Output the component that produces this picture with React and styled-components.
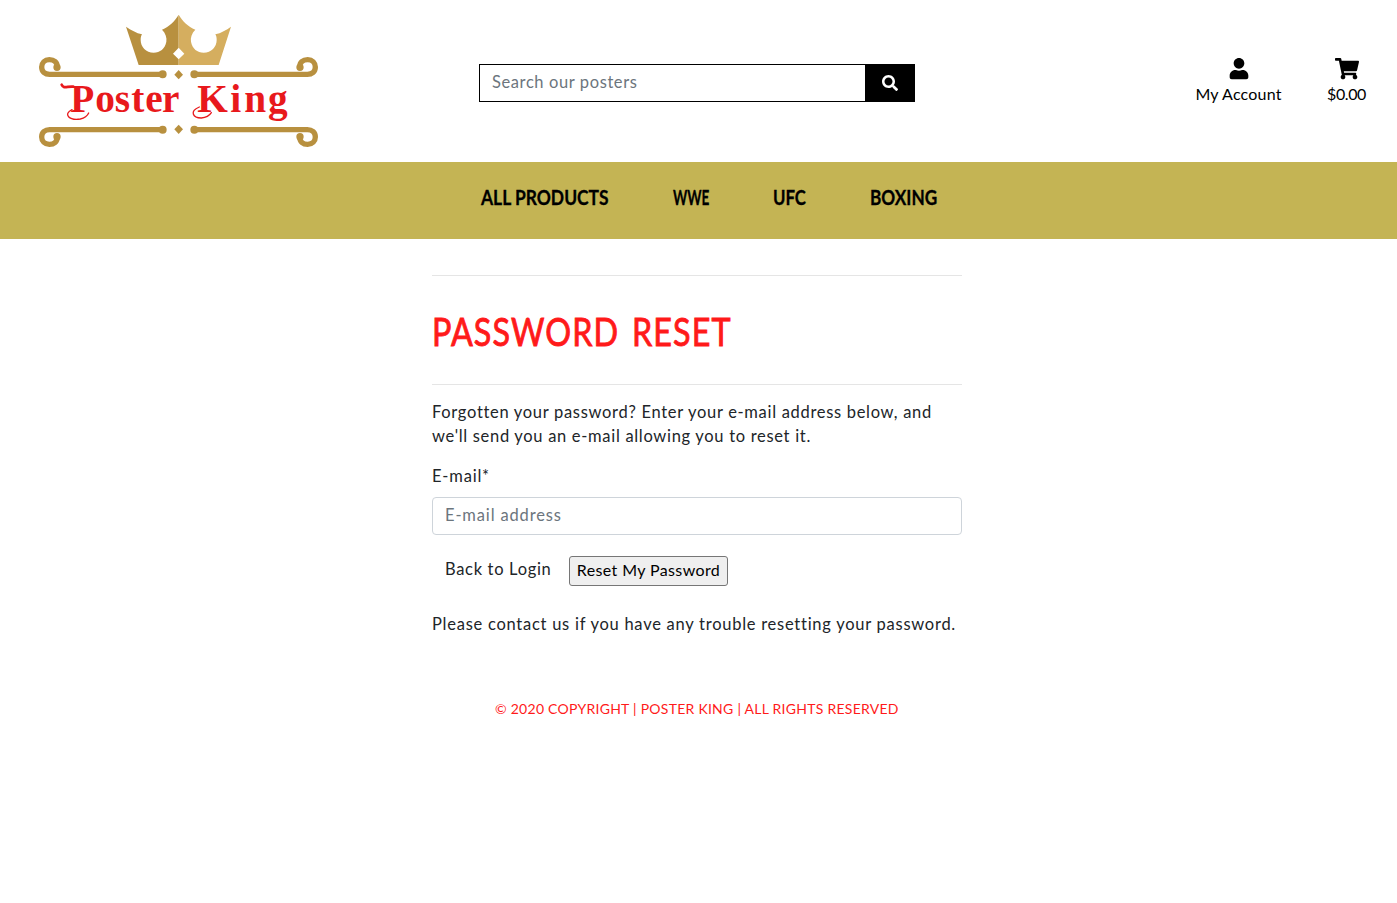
import React from "react";
import styled, { createGlobalStyle } from "styled-components";
import { FaUser, FaShoppingCart, FaSearch } from "react-icons/fa";

const GlobalStyle = createGlobalStyle`
  *, *::before, *::after { box-sizing: border-box; }
  body {
    margin: 0;
    background: #fff;
    color: #212529;
    font-family: Lato, "Open Sans", sans-serif;
    font-size: 16.5px;
    line-height: 24px;
  }
`;

const Header = styled.header`
  display: grid;
  grid-template-columns: 479px 436px 1fr;
  height: 162px;
`;

const LogoLink = styled.a`
  display: block;
  padding: 5px 0 0 30px;
`;

const LogoSvg = styled.svg`
  display: block;
  width: 300px;
  height: 150px;
`;

const SearchForm = styled.form`
  display: flex;
  height: 38px;
  margin-top: 64px;
`;

const SearchInput = styled.input`
  flex: 1;
  min-width: 0;
  padding: 0 12px 2px;
  border: 1px solid #000;
  border-right: 0;
  border-radius: 0;
  background: #fff;
  font: inherit;
  letter-spacing: 0.6px;
  outline: none;
  &::placeholder { color: #6c757d; opacity: 1; }
`;

const SearchButton = styled.button`
  display: flex;
  align-items: center;
  justify-content: center;
  width: 50px;
  padding: 0;
  border: 0;
  background: #000;
  color: #fff;
  font-size: 16px;
`;

const Actions = styled.div`
  display: flex;
  justify-content: flex-end;
  align-items: flex-start;
  gap: 45px;
  padding: 58px 31px 0 0;
`;

const Action = styled.a`
  display: flex;
  flex-direction: column;
  align-items: center;
  width: ${(p) => p.$width}px;
  color: #000;
  font-size: 16px;
  letter-spacing: ${(p) => p.$spacing}px;
  svg { display: block; width: 24px; height: 21.33px; margin-top: 0.4px; }
  span { margin-top: 2px; white-space: nowrap; }
`;

const Nav = styled.nav`
  display: flex;
  height: 77px;
  padding: 23px 0 0 481px;
  gap: 64px;
  background: #c4b454;
`;

const NavLink = styled.a`
  width: ${(p) => p.$width}px;
  color: #000;
  font-size: 20px;
  font-weight: 700;
  white-space: nowrap;
  -webkit-text-stroke: 0.3px #000;
  span {
    display: inline-block;
    transform: scaleX(${(p) => p.$condense});
    transform-origin: left;
  }
`;

const Main = styled.main`
  width: 530px;
  margin: 36px 0 0 432px;
`;

const Rule = styled.hr`
  height: 0;
  margin: 0;
  border: 0;
  border-top: 1px solid rgba(0, 0, 0, 0.1);
`;

const Title = styled.h1`
  margin: 0;
  height: 108px;
  padding-top: 31px;
  color: #ff1a1a;
  font-size: 38px;
  font-weight: 400;
  line-height: 48px;
  letter-spacing: 1.3px;
  word-spacing: 4px;
  white-space: nowrap;
  -webkit-text-stroke: 0.9px #ff1a1a;
  transform: scaleX(0.85);
  transform-origin: left;
`;

const Paragraph = styled.p`
  margin: ${(p) => p.$top}px 0 0;
  letter-spacing: ${(p) => p.$spacing}px;
  white-space: nowrap;
`;

const Label = styled.label`
  display: block;
  margin: 16px 0 9px;
  letter-spacing: 0.8px;
`;

const EmailInput = styled.input`
  display: block;
  width: 100%;
  height: 38px;
  padding: 0 12px 2px;
  border: 1px solid #ced4da;
  border-radius: 4px;
  font: inherit;
  letter-spacing: 0.85px;
  outline: none;
  &::placeholder { color: #6c757d; opacity: 1; }
`;

const ButtonRow = styled.div`
  display: flex;
  height: 30px;
  margin-top: 21px;
`;

const BackLink = styled.a`
  width: 137px;
  padding: 1px 0 0 13px;
  letter-spacing: 0.68px;
  white-space: nowrap;
`;

const ResetButton = styled.button`
  width: 159px;
  height: 30px;
  padding: 0 0 3px;
  border: 1px solid #767676;
  border-radius: 3px;
  background: #efefef;
  color: #000;
  font: inherit;
  font-size: 16px;
  letter-spacing: 0.38px;
  white-space: nowrap;
`;

const Footer = styled.footer`
  margin-top: 61px;
  padding-left: 495px;
  color: #ff1a1a;
  font-size: 14px;
  letter-spacing: 0.26px;
  white-space: nowrap;
`;

/* One scroll bar of the frame: a curled end, a rail and a round tip. */
function Scroll() {
  return (
    <g fill="none" stroke="#b8903f" strokeWidth="16" strokeLinecap="round">
      <path d="M82 187 C82 171 72 164 58 164 C44 164 35 174 35 186 C35 200 45 208 59 208 H396" />
      <circle cx="81" cy="187" r="3" />
      <circle cx="398" cy="208" r="4" />
    </g>
  );
}

function Frame() {
  return (
    <>
      <Scroll />
      <g transform="translate(891 0) scale(-1 1)"><Scroll /></g>
      <path d="M446 195l13 14-13 14-13-14z" fill="#b8903f" />
    </>
  );
}

function Logo() {
  return (
    <LogoSvg viewBox="0 0 900 450" role="img" aria-label="Poster King">
      <path fill="#b8903f" d="M446 29C435 48 418 65 396 74C407 85 411 98 409 110C405 131 390 143 371 143C348 143 332 126 332 105C332 98 333 93 336 88C319 84 303 75 288 65L326 180H446V163L429 146L446 128Z" />
      <path fill="#d5ae5f" d="M446 29C457 48 474 65 496 74C485 85 481 98 483 110C487 131 502 143 521 143C544 143 560 126 560 105C560 98 559 93 556 88C573 84 589 75 603 65L566 180H446V163L463 146L446 128Z" />
      <Frame />
      <g transform="translate(0 582) scale(1 -1)"><Frame /></g>
      <g fill="#e8191c" fontFamily="'Liberation Serif', serif" fontWeight="700" fontSize="118">
        <text x="121 196 254 304 346 396" y="320">Poster</text>
        <text x="502 601 643 714" y="320">King</text>
      </g>
      <g fill="none" stroke="#e8191c" strokeLinecap="round">
        <path d="M95 239C101 253 112 243 130 245" strokeWidth="8" />
        <path d="M126 314C98 328 118 347 151 342C164 339 172 333 176 324" strokeWidth="4" />
        <path d="M508 306C478 318 488 339 514 339C530 338 539 331 544 323" strokeWidth="4" />
      </g>
    </LogoSvg>
  );
}

export default function App() {
  return (
    <>
      <GlobalStyle />
      <Header>
        <LogoLink><Logo /></LogoLink>
        <SearchForm>
          <SearchInput placeholder="Search our posters" />
          <SearchButton type="button" aria-label="Search"><FaSearch /></SearchButton>
        </SearchForm>
        <Actions>
          <Action $width={87} $spacing={0.2}><FaUser /><span>My Account</span></Action>
          <Action $width={39} $spacing={-0.4}><FaShoppingCart /><span>$0.00</span></Action>
        </Actions>
      </Header>
      <Nav>
        <NavLink $width={128} $condense={0.872}><span>ALL PRODUCTS</span></NavLink>
        <NavLink $width={36} $condense={0.68}><span>WWE</span></NavLink>
        <NavLink $width={33} $condense={0.84}><span>UFC</span></NavLink>
        <NavLink $width={67} $condense={0.86}><span>BOXING</span></NavLink>
      </Nav>
      <Main>
        <Rule />
        <Title>PASSWORD RESET</Title>
        <Rule />
        <Paragraph $top={15} $spacing={0.69}>
          Forgotten your password? Enter your e-mail address below, and
          <br />
          we'll send you an e-mail allowing you to reset it.
        </Paragraph>
        <Label htmlFor="email">E-mail*</Label>
        <EmailInput id="email" placeholder="E-mail address" />
        <ButtonRow>
          <BackLink>Back to Login</BackLink>
          <ResetButton type="button">Reset My Password</ResetButton>
        </ButtonRow>
        <Paragraph $top={26} $spacing={0.74}>
          Please contact us if you have any trouble resetting your password.
        </Paragraph>
      </Main>
      <Footer>© 2020 COPYRIGHT | POSTER KING | ALL RIGHTS RESERVED</Footer>
    </>
  );
}
